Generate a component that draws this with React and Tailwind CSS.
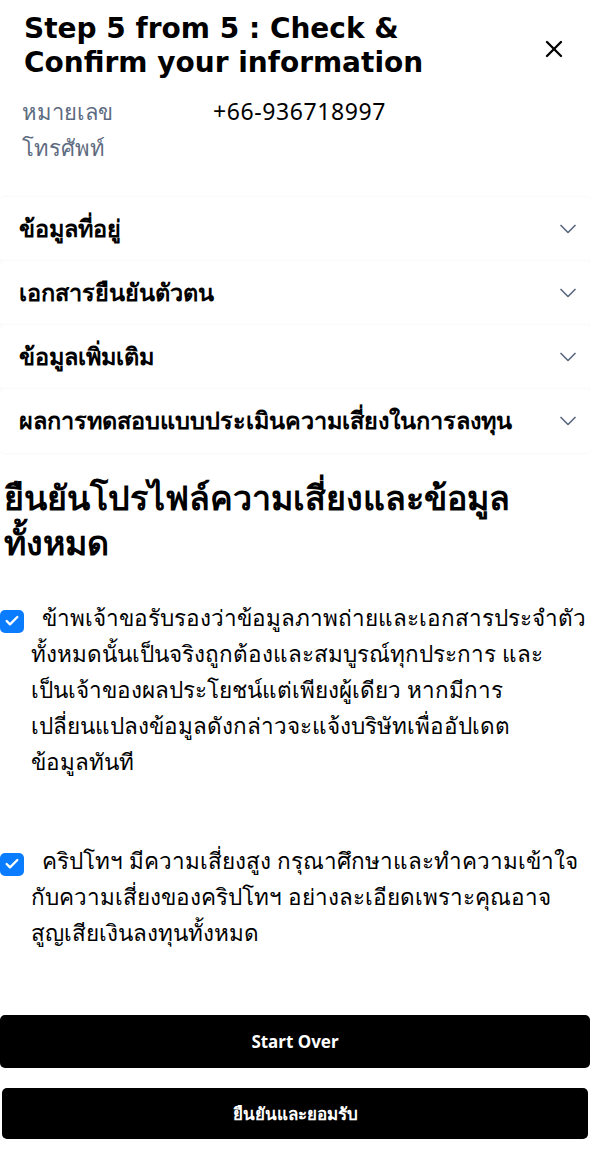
import { ChevronDown, X, Check } from "lucide-react";

const sections = [
  "ข้อมูลที่อยู่",
  "เอกสารยืนยันตัวตน",
  "ข้อมูลเพิ่มเติม",
  "ผลการทดสอบแบบประเมินความเสี่ยงในการลงทุน",
];

const CheckItem = ({ lines }) => (
  <div className="whitespace-nowrap pl-[31px] text-[22.5px] leading-[36px] text-black">
    <span className="relative top-[3px] -ml-[31px] mr-[18px] inline-flex h-[23px] w-[24px] items-center justify-center rounded-[5px] bg-[#0a7cff] align-baseline">
      <Check className="h-4 w-4 text-white" strokeWidth={3.5} />
    </span>
    {lines.map((l, i) => (
      <span key={i}>
        {i > 0 && <br />}
        {l}
      </span>
    ))}
  </div>
);

export default function App() {
  return (
    <div className="min-h-screen w-[590px] bg-white font-['Noto_Sans','Open_Sans',sans-serif] text-black">
      <div className="flex items-start justify-between pl-[24px] pr-[22px] pt-[12px]">
        <h1 className="font-['DejaVu_Sans',sans-serif] text-[28px] font-bold leading-[34px]">
          Step 5 from 5 : Check &amp;
          <br />
          Confirm your information
        </h1>
        <button type="button" className="mt-[23px] text-black">
          <X className="h-[28px] w-[28px]" strokeWidth={2} />
        </button>
      </div>

      <div className="mt-[13px] flex pl-[22px] text-[22px] leading-[36px]">
        <div className="w-[191px] text-[#5d6b80]">
          หมายเลข
          <br />
          โทรศัพท์
        </div>
        <div className="text-[23px] tracking-[0.6px]">+66-936718997</div>
      </div>

      <div className="mt-[32px] flex flex-col">
        {sections.map((s) => (
          <div
            key={s}
            className="flex h-[64px] items-center justify-between rounded-[4px] bg-white pl-[19px] pr-[8px] shadow-[0_0_3px_rgba(0,0,0,0.06)]"
          >
            <span className="text-[23.5px] font-bold">{s}</span>
            <ChevronDown className="h-[28px] w-[28px] text-[#5d6b80]" strokeWidth={1.5} />
          </div>
        ))}
      </div>

      <h2 className="mt-[22px] pl-[4px] pr-[30px] text-[34px] font-bold leading-[45px]">
        ยืนยันโปรไฟล์ความเสี่ยงและข้อมูล
        <br />
        ทั้งหมด
      </h2>

      <div className="mt-[35px]">
        <CheckItem
          lines={[
            "ข้าพเจ้าขอรับรองว่าข้อมูลภาพถ่ายและเอกสารประจำตัว",
            "ทั้งหมดนั้นเป็นจริงถูกต้องและสมบูรณ์ทุกประการ และ",
            "เป็นเจ้าของผลประโยชน์แต่เพียงผู้เดียว หากมีการ",
            "เปลี่ยนแปลงข้อมูลดังกล่าวจะแจ้งบริษัทเพื่ออัปเดต",
            "ข้อมูลทันที",
          ]}
        />
      </div>

      <div className="mt-[63px]">
        <CheckItem
          lines={[
            "คริปโทฯ มีความเสี่ยงสูง กรุณาศึกษาและทำความเข้าใจ",
            "กับความเสี่ยงของคริปโทฯ อย่างละเอียดเพราะคุณอาจ",
            "สูญเสียเงินลงทุนทั้งหมด",
          ]}
        />
      </div>

      <div className="mt-[64px] flex flex-col gap-[20px] pb-[18px]">
        <button
          type="button"
          className="h-[53px] w-[590px] rounded-[5px] bg-black text-[17px] font-bold text-white"
        >
          Start Over
        </button>
        <button
          type="button"
          className="mx-[2px] h-[51px] rounded-[5px] bg-black text-[17px] font-bold text-white"
        >
          ยืนยันและยอมรับ
        </button>
      </div>
    </div>
  );
}
